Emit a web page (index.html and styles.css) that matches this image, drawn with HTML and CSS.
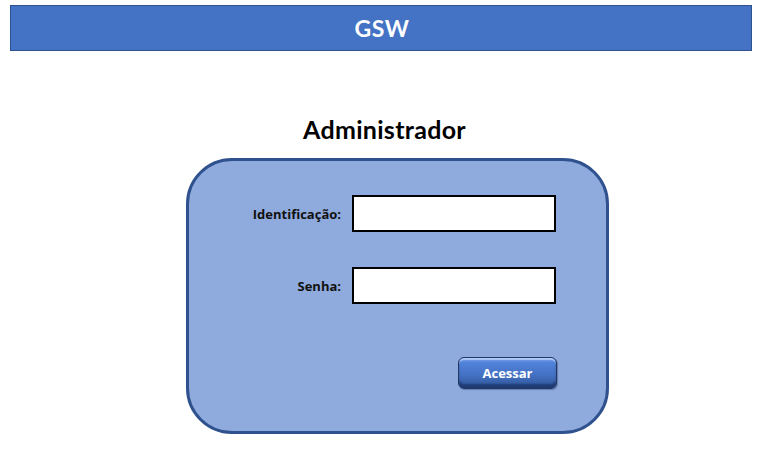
FILE: index.html
```html
<!DOCTYPE html>
<html lang="pt">
<head>
<meta charset="utf-8">
<title>GSW</title>
<link rel="stylesheet" href="styles.css">
</head>
<body>
<header class="topbar">GSW</header>
<main class="main">
  <h1 class="title">Administrador</h1>
  <form class="card">
    <div class="row">
      <label class="label" for="id">Identificação:</label>
      <input class="field" id="id" type="text">
    </div>
    <div class="row">
      <label class="label" for="pw">Senha:</label>
      <input class="field" id="pw" type="password">
    </div>
    <div class="actions">
      <button class="btn" type="button">Acessar</button>
    </div>
  </form>
</main>
</body>
</html>
```
FILE: styles.css
```css
html, body {
  margin: 0;
  padding: 0;
  background: #ffffff;
  width: 763px;
  height: 457px;
  overflow: hidden;
}
body {
  padding-top: 5px;
  box-sizing: border-box;
  font-family: "Lato", "Open Sans", sans-serif;
}
.topbar {
  margin: 0 11px 0 10px;
  height: 46px;
  box-sizing: border-box;
  background: #4472c4;
  border: 1px solid #2f528f;
  color: #ffffff;
  font-weight: 700;
  font-size: 23px;
  letter-spacing: 0.5px;
  display: flex;
  align-items: center;
  justify-content: center;
  padding-left: 2px;
}
.main {
  display: flex;
  flex-direction: column;
  align-items: center;
}
.title {
  margin: 63px 0 0 0;
  height: 44px;
  line-height: 30px;
  font-size: 25px;
  font-weight: 700;
  color: #000;
  letter-spacing: 0.3px;
  padding-left: 6px;
}
.card {
  margin: 0 0 0 32px;
  width: 423px;
  height: 276px;
  box-sizing: border-box;
  background: #8faadc;
  border: 3px solid #2f528f;
  border-radius: 46px;
  padding: 34px 0 0 0;
  display: flex;
  flex-direction: column;
}
.row {
  display: grid;
  grid-template-columns: 152px 204px;
  column-gap: 11px;
  align-items: center;
  margin-bottom: 35px;
}
.row + .row {
  margin-bottom: 0;
}
.label {
  text-align: right;
  font-family: "Open Sans", "Lato", sans-serif;
  font-weight: 700;
  font-size: 13px;
  color: #111;
}
.field {
  height: 37px;
  box-sizing: border-box;
  border: 2px solid #000;
  background: #fff;
  margin: 0;
  padding: 0 4px;
  outline: none;
}
.actions {
  display: flex;
  justify-content: flex-end;
  padding-right: 49px;
  margin-top: 53px;
}
.btn {
  width: 99px;
  height: 32px;
  box-sizing: border-box;
  border: 1px solid #203864;
  border-radius: 6px;
  background: linear-gradient(to bottom, #7fa3e6 0%, #5183dc 15%, #4472c4 55%, #2f5597 100%);
  box-shadow: inset 0 -4px 2px rgba(20, 40, 90, 0.6), inset 0 2px 1px rgba(200, 220, 255, 0.7), 1px 1px 1px rgba(40, 60, 100, 0.4);
  color: #fff;
  font-family: "Open Sans", "Lato", sans-serif;
  font-weight: 700;
  font-size: 13px;
  padding: 0;
  cursor: pointer;
}
```
